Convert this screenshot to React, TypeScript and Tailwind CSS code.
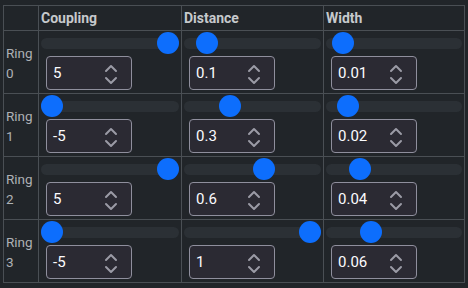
const FONT = "font-['Roboto','Liberation_Sans',sans-serif]";

type Col = { key: 'coupling' | 'distance' | 'width'; title: string; min: number; max: number };

const COLS: Col[] = [
  { key: 'coupling', title: 'Coupling', min: -5, max: 5 },
  { key: 'distance', title: 'Distance', min: 0, max: 1 },
  { key: 'width', title: 'Width', min: 0, max: 0.2 },
];

const RINGS = [
  { coupling: 5, distance: 0.1, width: 0.01 },
  { coupling: -5, distance: 0.3, width: 0.02 },
  { coupling: 5, distance: 0.6, width: 0.04 },
  { coupling: -5, distance: 1, width: 0.06 },
];

function Slider({ value, min, max }: { value: number; min: number; max: number }) {
  const f = (value - min) / (max - min);
  return (
    <div className="relative h-[22px] flex items-center">
      <div className="h-[11px] w-full rounded-full bg-[#2b3035]" />
      {/* thumb */}
      <div
        className="absolute top-0 h-[22px] w-[22px] rounded-full bg-[#0d6efd]"
        style={{ left: `calc(${f * 100}% - ${f * 22}px)` }}
      />
    </div>
  );
}

function NumberBox({ value }: { value: number }) {
  return (
    <div className="ml-[5px] relative flex items-center h-[34px] w-[86px] rounded-[4px] border border-[#8f8f9d] bg-[#2b2a33] pl-[6px]">
      <span className="text-[15px] text-[#fbfbfe]">{value}</span>
      <svg className="absolute left-[57px] top-[7px]" width="14" height="22" viewBox="0 0 14 22" fill="none">
        <path d="M2 7 L7 2 L12 7" stroke="#9b9ba6" strokeWidth="2" strokeLinecap="round" strokeLinejoin="round" />
        <path d="M2 14 L7 19 L12 14" stroke="#9b9ba6" strokeWidth="2" strokeLinecap="round" strokeLinejoin="round" />
      </svg>
    </div>
  );
}

export default function App() {
  return (
    <div className={`w-[468px] h-[288px] bg-[#212529] pt-[5px] pl-[3px] ${FONT}`}>
      <table className="border-collapse table-fixed w-[461px]">
        <colgroup>
          <col className="w-[35px]" />
          <col className="w-[143px]" />
          <col className="w-[142px]" />
          <col className="w-[141px]" />
        </colgroup>
        <thead>
          <tr className="h-[25px]">
            <th className="border border-[#4a4f54]" />
            {COLS.map((c) => (
              <th
                key={c.key}
                className="border border-[#4a4f54] text-left align-middle px-[2px] text-[14px] font-bold text-[#c6c9cc]"
              >
                {c.title}
              </th>
            ))}
          </tr>
        </thead>
        <tbody>
          {RINGS.map((r, i) => (
            <tr key={i} className="h-[63px]">
              <td className="border border-[#4a4f54] px-[2px] align-middle text-[13.5px] leading-[20px] text-[#aeb1b5]">
                <div className="flex flex-col pt-[2px]">
                  <span>Ring</span>
                  <span>{i}</span>
                </div>
              </td>
              {COLS.map((c) => (
                <td key={c.key} className="border border-[#4a4f54] px-[2px] pt-[1px] pb-[1px] align-top">
                  <Slider value={r[c.key]} min={c.min} max={c.max} />
                  <div className="mt-[2px]">
                    <NumberBox value={r[c.key]} />
                  </div>
                </td>
              ))}
            </tr>
          ))}
        </tbody>
      </table>
    </div>
  );
}
